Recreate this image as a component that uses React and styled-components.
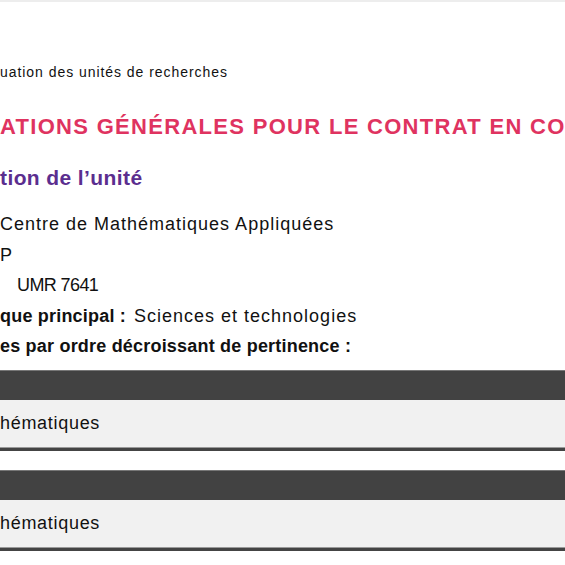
import React from "react";
import styled, { createGlobalStyle } from "styled-components";

const GlobalStyle = createGlobalStyle`
  html, body {
    margin: 0;
    padding: 0;
    background: #ffffff;
    overflow: hidden;
  }
  body {
    font-family: "Liberation Sans", Arial, sans-serif;
    color: #111111;
  }
`;

const Page = styled.main`
  width: 565px;
  height: 565px;
  border-top: 2px solid #ededed;
  box-sizing: border-box;
  display: flex;
  flex-direction: column;
  overflow: hidden;
`;

const Breadcrumb = styled.p`
  margin: 60px 0 0;
  font-size: 14px;
  line-height: 20px;
  letter-spacing: 0.95px;
  white-space: nowrap;
`;

const MainTitle = styled.h1`
  margin: 30px 0 0;
  font-size: 22px;
  line-height: 30px;
  font-weight: 700;
  color: #df3360;
  text-transform: uppercase;
  white-space: nowrap;
  letter-spacing: 1.3px;
`;

const SectionTitle = styled.h2`
  margin: 21px 0 0;
  font-size: 21px;
  line-height: 30px;
  font-weight: 700;
  color: #5b2e8f;
  white-space: nowrap;
  letter-spacing: 0.4px;
`;

const InfoList = styled.div`
  margin-top: 16px;
  display: flex;
  flex-direction: column;
`;

const InfoLine = styled.div`
  font-size: 18px;
  line-height: 30.5px;
  white-space: nowrap;
  padding-left: ${(p) => p.$indent || 0}px;
  letter-spacing: ${(p) => (p.$tight ? "-0.6px" : "1px")};
`;

const Label = styled.strong`
  font-weight: 700;
  margin-right: 8px;
  letter-spacing: 0.2px;
`;

const Tables = styled.div`
  margin-top: 8px;
  display: flex;
  flex-direction: column;
  gap: 19px;
`;

const Block = styled.section`
  display: flex;
  flex-direction: column;
`;

const HeadBar = styled.div`
  height: 29px;
  background: #424242;
  border-top: 1px solid #777777;
`;

const Row = styled.div`
  height: 48px;
  background: #f1f1f1;
  border-bottom: 3px solid #444444;
  box-shadow: inset 0 -1px 0 #9a9a9a;
  display: flex;
  align-items: center;
  font-size: 18px;
  letter-spacing: 0.7px;
`;

const domains = ["hématiques", "hématiques"];

export default function App() {
  return (
    <>
      <GlobalStyle />
      <Page>
        <Breadcrumb>uation des unités de recherches</Breadcrumb>
        <MainTitle>ations générales pour le contrat en co</MainTitle>
        <SectionTitle>tion de l’unité</SectionTitle>
        <InfoList>
          <InfoLine>Centre de Mathématiques Appliquées</InfoLine>
          <InfoLine>P</InfoLine>
          <InfoLine $indent={17} $tight>UMR 7641</InfoLine>
          <InfoLine>
            <Label>que principal :</Label>Sciences et technologies
          </InfoLine>
          <InfoLine>
            <Label>es par ordre décroissant de pertinence :</Label>
          </InfoLine>
        </InfoList>
        <Tables>
          {domains.map((d, i) => (
            <Block key={i}>
              <HeadBar />
              <Row>{d}</Row>
            </Block>
          ))}
        </Tables>
      </Page>
    </>
  );
}
